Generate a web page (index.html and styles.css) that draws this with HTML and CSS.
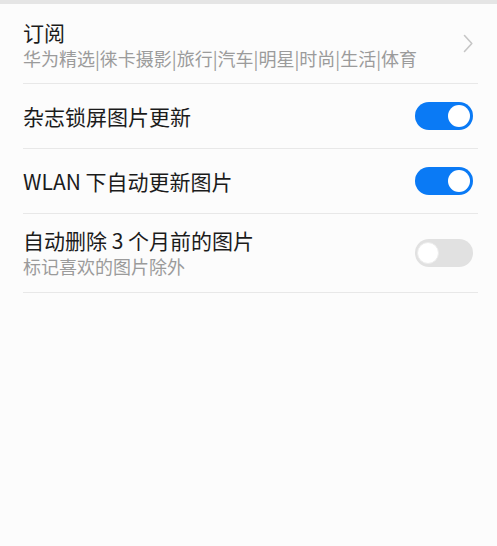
FILE: index.html
```
<!DOCTYPE html>
<html lang="zh-CN">
<head>
<meta charset="utf-8">
<title>设置</title>
<link rel="stylesheet" href="styles.css">
</head>
<body>
<div class="topbar"></div>
<ul class="list">
  <li class="row row-tall row-first">
    <div class="texts">
      <div class="title">订阅</div>
      <div class="sub">华为精选|徕卡摄影|旅行|汽车|明星|时尚|生活|体育</div>
    </div>
    <svg class="chev" width="10" height="19" viewBox="0 0 10 19"><path d="M1.5 1.5 L8.8 9.5 L1.5 17.5" fill="none" stroke="#c6c6c6" stroke-width="1.6" stroke-linecap="round" stroke-linejoin="round"/></svg>
  </li>
  <li class="row">
    <div class="texts"><div class="title">杂志锁屏图片更新</div></div>
    <span class="switch on"><span class="knob"></span></span>
  </li>
  <li class="row">
    <div class="texts"><div class="title">WLAN 下自动更新图片</div></div>
    <span class="switch on"><span class="knob"></span></span>
  </li>
  <li class="row row-tall">
    <div class="texts">
      <div class="title">自动删除 3 个月前的图片</div>
      <div class="sub">标记喜欢的图片除外</div>
    </div>
    <span class="switch off"><span class="knob"></span></span>
  </li>
</ul>
</body>
</html>
```
FILE: styles.css
```
html, body {
  margin: 0;
  padding: 0;
  background: #fcfcfc;
  font-family: "Noto Sans CJK SC", "Noto Sans", sans-serif;
}
.topbar {
  height: 4px;
  background: #e5e5e5;
}
.list {
  list-style: none;
  margin: 0 19px 0 23px;
  padding: 0;
}
.row {
  display: flex;
  align-items: center;
  justify-content: space-between;
  height: 64px;
  border-bottom: 1px solid #e8e8e8;
  padding-right: 5px;
}
.row-tall {
  height: 78px;
}
.row-first {
  height: 79px;
}
.row-first .texts {
  padding-top: 4px;
}
.texts {
  display: flex;
  flex-direction: column;
}
.title {
  font-size: 21px;
  line-height: 26px;
  color: #1b1b1b;
}
.sub {
  font-size: 18px;
  line-height: 27px;
  color: #9b9b9b;
}
.chev {
  display: block;
}
.switch {
  position: relative;
  display: block;
  width: 58px;
  height: 28px;
  border-radius: 14px;
  box-sizing: border-box;
}
.switch.on {
  background: #0a7af5;
}
.switch.off {
  background: #e1e1e1;
}
.knob {
  position: absolute;
  top: 3px;
  width: 22px;
  height: 22px;
  border-radius: 50%;
  background: #ffffff;
  box-sizing: border-box;
}
.switch.on .knob {
  right: 3px;
}
.switch.off .knob {
  left: 2px;
  border: 1px solid #ececec;
}
```
